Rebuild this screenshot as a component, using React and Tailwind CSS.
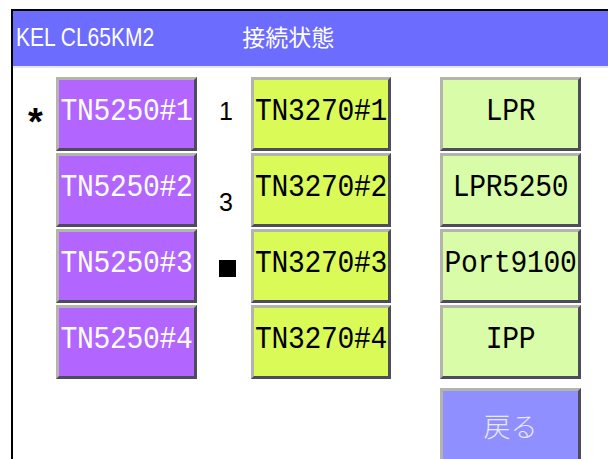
import React from 'react';

const bevel =
  'box-border h-[74px] border-[3px] border-t-[#b4b4ac] border-l-[#b4b4ac] border-r-[#4c4c5c] border-b-[#4c4c5c] flex items-center justify-center';

const mono = { fontFamily: '"Liberation Mono", "DejaVu Sans Mono", monospace' };
const sans = { fontFamily: '"Liberation Sans", Arial, sans-serif' };
const cjk = { fontFamily: '"Noto Sans CJK JP", "Noto Sans CJK SC", sans-serif' };

const KeyButton = ({ label, tone }) => {
  const tones = {
    purple: 'bg-[#b266ff] text-white',
    lime: 'bg-[#dafa58] text-black',
    mint: 'bg-[#d8fca8] text-black',
  };
  return (
    <div className={`${bevel} ${tones[tone]}`}>
      <span className="block text-[28px] leading-none scale-y-[1.15] -mt-[4px] tracking-[-0.3px]" style={mono}>
        {label}
      </span>
    </div>
  );
};

const rows = [
  { mark: '*', left: 'TN5250#1', mid: 'TN3270#1', midMark: '1', right: 'LPR' },
  { mark: '', left: 'TN5250#2', mid: 'TN3270#2', midMark: '3', right: 'LPR5250' },
  { mark: '', left: 'TN5250#3', mid: 'TN3270#3', midMark: 'square', right: 'Port9100' },
  { mark: '', left: 'TN5250#4', mid: 'TN3270#4', midMark: '', right: 'IPP' },
];

const MidMark = ({ value, row }) => {
  if (value === 'square') {
    return <div className="w-[17px] h-[17px] bg-black ml-[22px] mt-[2px]" />;
  }
  if (!value) return null;
  return (
    <span
      className={`block text-[25px] leading-none text-black ml-[22px] ${row === 1 ? 'mt-[22px]' : '-mt-[8px]'}`}
      style={sans}
    >
      {value}
    </span>
  );
};

export default function App() {
  return (
    <div className="w-[608px] h-[459px] overflow-hidden bg-white">
      <div className="mt-[9px] ml-[11px] w-[640px] h-[470px] border-t-2 border-l-2 border-black bg-white">
        {/* title bar */}
        <div className="h-[57px] bg-[#6c6cff] flex items-center text-white border-b-2 border-[#e6e6f0]">
          <span className="block ml-[3px] text-[21px] leading-none scale-y-[1.25] -mt-[4px]" style={sans}>
            KEL CL65KM2
          </span>
          <span className="block ml-[88px] text-[23px] leading-none -mt-[4px]" style={cjk}>
            接続状態
          </span>
        </div>

        {/* button grid */}
        <div className="mt-[9px] grid grid-cols-[43px_141px_54px_140px_49px_141px] auto-rows-[76px]">
          {rows.map((r, i) => (
            <React.Fragment key={r.left}>
              <div className="flex items-center justify-center">
                {r.mark && (
                  <span className="block text-[38px] font-bold leading-none mt-[14px] ml-[2px]" style={sans}>
                    {r.mark}
                  </span>
                )}
              </div>
              <KeyButton label={r.left} tone="purple" />
              <div className="flex items-center">
                <MidMark value={r.midMark} row={i} />
              </div>
              <KeyButton label={r.mid} tone="lime" />
              <div />
              <KeyButton label={r.right} tone="mint" />
            </React.Fragment>
          ))}
        </div>

        <div className="mt-[7px] grid grid-cols-[43px_141px_54px_140px_49px_141px]">
          <div className={`col-start-6 ${bevel} bg-[#8f8fff]`}>
            <span className="block text-[27px] leading-none text-[#e8e8ff] font-light" style={cjk}>
              戻る
            </span>
          </div>
        </div>
      </div>
    </div>
  );
}
